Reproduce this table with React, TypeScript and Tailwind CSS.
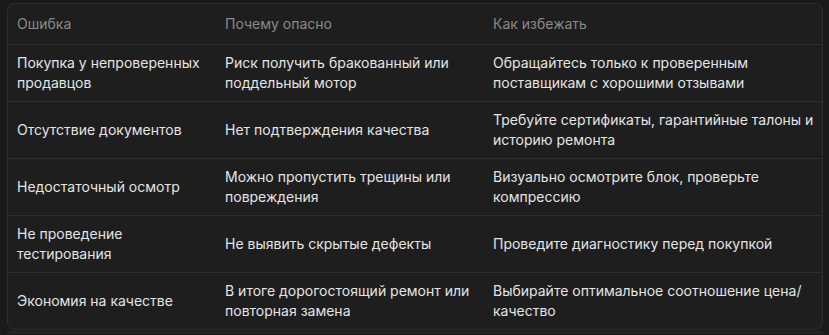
const rows: [string, string, string][] = [
  ['Покупка у непроверенных продавцов', 'Риск получить бракованный или поддельный мотор', 'Обращайтесь только к проверенным поставщикам с хорошими отзывами'],
  ['Отсутствие документов', 'Нет подтверждения качества', 'Требуйте сертификаты, гарантийные талоны и историю ремонта'],
  ['Недостаточный осмотр', 'Можно пропустить трещины или повреждения', 'Визуально осмотрите блок, проверьте компрессию'],
  ['Не проведение тестирования', 'Не выявить скрытые дефекты', 'Проведите диагностику перед покупкой'],
  ['Экономия на качестве', 'В итоге дорогостоящий ремонт или повторная замена', 'Выбирайте оптимальное соотношение цена/качество'],
]

const headers = ['Ошибка', 'Почему опасно', 'Как избежать']

export default function App() {
  return (
    <div className="min-h-[335px] w-[829px] bg-[#1a1a1a] px-[7px] pt-[3px] font-['Inter',sans-serif] text-[14px] leading-5">
      <div className="w-[816px] overflow-hidden rounded-lg border border-[#2e2e2e] bg-[#1e1e1e]">
        <table className="w-full table-fixed border-collapse text-left">
          <colgroup>
            <col className="w-[208px]" />
            <col className="w-[268px]" />
            <col />
          </colgroup>
          <thead>
            <tr className="border-b border-[#2e2e2e]">
              {headers.map((h) => (
                <th key={h} className="py-[10px] pl-[9px] pr-[6px] font-normal text-[#8a8a8a]">
                  {h}
                </th>
              ))}
            </tr>
          </thead>
          <tbody>
            {rows.map((r, i) => (
              <tr key={i} className={i < rows.length - 1 ? 'border-b border-[#2e2e2e]' : ''}>
                {r.map((c, j) => (
                  <td key={j} className="h-[56px] py-2 pl-[9px] pr-[6px] align-middle text-[#e4e4e4]">
                    {c}
                  </td>
                ))}
              </tr>
            ))}
          </tbody>
        </table>
      </div>
      <div className="mt-px h-[3px] w-[816px] bg-[#242424]" />
    </div>
  )
}
